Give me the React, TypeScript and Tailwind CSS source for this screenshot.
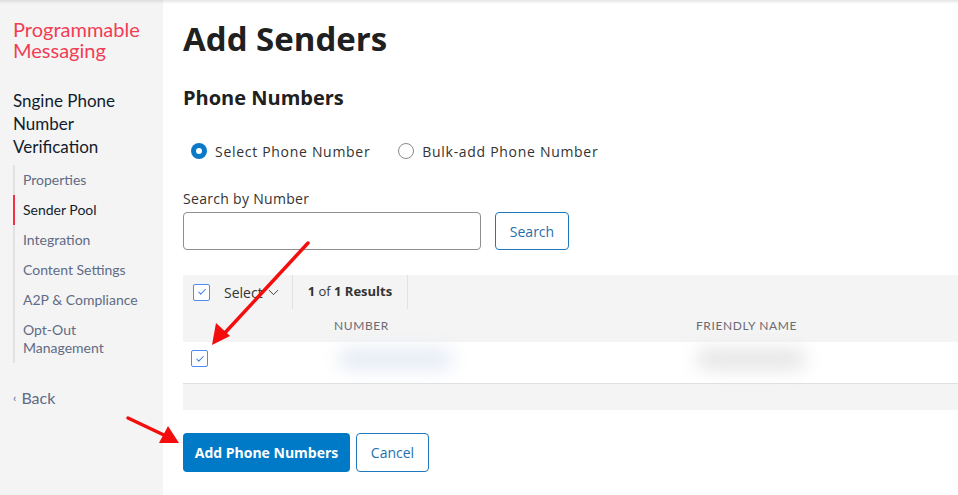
import { ChevronDown, Check } from "lucide-react";

const navItems = [
  { label: "Properties", active: false },
  { label: "Sender Pool", active: true },
  { label: "Integration", active: false },
  { label: "Content Settings", active: false },
  { label: "A2P & Compliance", active: false },
  { label: "Opt-Out Management", active: false },
];

function CheckBox() {
  return (
    <div className="flex h-[17px] w-[17px] items-center justify-center rounded-[2px] border border-[#4d8df0] bg-white">
      <Check size={10} strokeWidth={2.5} className="text-[#3b7ee8]" />
    </div>
  );
}

function Sidebar() {
  return (
    <aside className="flex w-[163px] shrink-0 flex-col bg-[#f4f4f4] pl-[13px] pr-2 pt-[19px]">
      <div className="text-[20px] leading-[21px] text-[#f23d55]">Programmable Messaging</div>
      <div className="mt-[28px] pr-2 text-[17px] leading-[23px] text-[#121c2d]">
        Sngine Phone Number Verification
      </div>
      <ul className="mt-[7px] border-l-2 border-[#e1e1e1]">
        {navItems.map((item) => (
          <li
            key={item.label}
            className={`-ml-[2px] border-l-2 py-[6px] pl-[8px] pr-2 text-[14px] leading-[18px] ${
              item.active ? "border-[#f22f46] text-[#121c2d]" : "border-transparent text-[#606b85]"
            }`}
          >
            {item.label}
          </li>
        ))}
      </ul>
      <div className="mt-[25px] flex items-center gap-[5px] text-[16px] leading-[20px] text-[#606b85]">
        <span className="text-[12px]">‹</span>
        <span>Back</span>
      </div>
    </aside>
  );
}

export default function App() {
  return (
    <div
      className="relative flex h-[495px] w-[958px] overflow-hidden bg-white"
      style={{ fontFamily: "Lato, 'Noto Sans', sans-serif" }}
    >
      <div className="pointer-events-none absolute inset-x-0 top-0 h-[4px] bg-gradient-to-b from-black/10 to-transparent" />
      <Sidebar />

      <main className="flex flex-1 flex-col pl-[20px] pt-[19px] font-['Open_Sans',sans-serif]">
        <h1 className="text-[33px] font-bold leading-[40px] text-[#202020]">Add Senders</h1>
        <h2 className="mt-[25px] text-[20px] font-bold leading-[28px] text-[#202020]">Phone Numbers</h2>

        <div className="mt-[29px] flex h-[20px] items-center pl-[8px] text-[14px] tracking-[0.7px] text-[#333]">
          <div className="flex items-center gap-[8px]">
            <span className="flex h-[16px] w-[16px] items-center justify-center rounded-full bg-[#0a7ac8]">
              <span className="h-[6px] w-[6px] rounded-full bg-white" />
            </span>
            <span>Select Phone Number</span>
          </div>
          <div className="ml-[28px] flex items-center gap-[8px]">
            <span className="h-[16px] w-[16px] rounded-full border border-[#8a8a8a] bg-white" />
            <span>Bulk-add Phone Number</span>
          </div>
        </div>

        <label className="mt-[28px] text-[14px] leading-[20px] tracking-[0.3px] text-[#333]">Search by Number</label>
        <div className="mt-[3px] flex items-center gap-[14px]">
          <div className="h-[38px] w-[298px] rounded-[4px] border border-[#8f8f8f] bg-white" />
          <button className="h-[38px] w-[74px] rounded-[4px] border border-[#1f78bd] text-[14px] text-[#1f6fad]">
            Search
          </button>
        </div>

        <div className="mt-[25px] bg-[#f4f4f4]">
          <div className="flex h-[34px] items-center text-[14px] text-[#333]">
            <div className="flex h-full items-center gap-[14px] pl-[10px] pr-[10px]">
              <CheckBox />
              <span className="flex items-center gap-[2px]">
                Select <ChevronDown size={17} strokeWidth={1.3} />
              </span>
            </div>
            <div className="flex h-full items-center border-x border-[#e2e2e2] px-[15px] text-[13px]">
              <span className="font-bold">1</span>&nbsp;of&nbsp;<span className="font-bold">1 Results</span>
            </div>
          </div>
          <div className="flex h-[33px] items-center font-['Lato',sans-serif] text-[12px] tracking-[0.6px] text-[#6b6b75]">
            <span className="ml-[151px]">NUMBER</span>
            <span className="ml-[307px]">FRIENDLY NAME</span>
          </div>
          <div className="flex h-[42px] items-center border-b border-[#e0e0e0] bg-white pb-[8px] pl-[8px]">
            <CheckBox />
            <div className="ml-[130px] h-[22px] w-[115px] rounded-full bg-[#e6ebf5] blur-[9px]" />
            <div className="ml-[243px] h-[22px] w-[110px] rounded-full bg-[#e6e6e6] blur-[9px]" />
          </div>
          <div className="h-[26px]" />
        </div>

        <div className="mt-[23px] flex gap-[6px]">
          <button className="h-[39px] w-[167px] rounded-[4px] bg-[#0079c6] text-[14px] font-bold text-white">
            Add Phone Numbers
          </button>
          <button className="h-[39px] w-[73px] rounded-[4px] border border-[#1f78bd] text-[14px] text-[#1f6fad]">
            Cancel
          </button>
        </div>
      </main>

      <svg className="pointer-events-none absolute inset-0" width="958" height="495">
        <line x1="308" y1="243" x2="222" y2="336" stroke="#f40d0d" strokeWidth="3.5" strokeLinecap="round" />
        <path d="M212,345 L216,323 L230,336 Z" fill="#f40d0d" />
        <line x1="128" y1="418" x2="166" y2="436" stroke="#f40d0d" strokeWidth="3.5" strokeLinecap="round" />
        <path d="M179,443 L159,443 L168,426 Z" fill="#f40d0d" />
      </svg>
    </div>
  );
}
